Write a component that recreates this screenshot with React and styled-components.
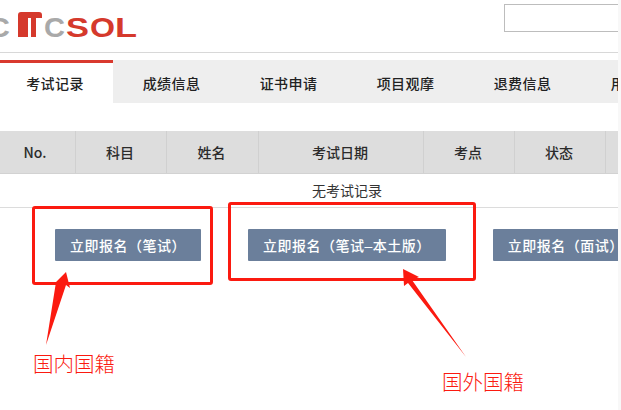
import React from 'react';
import styled, { createGlobalStyle } from 'styled-components';

const tabs = ['考试记录', '成绩信息', '证书申请', '项目观摩', '退费信息', '用户信息'];
const columns = [
  { label: 'No.', width: 76 },
  { label: '科目', width: 91 },
  { label: '姓名', width: 92 },
  { label: '考试日期', width: 165 },
  { label: '考点', width: 91 },
  { label: '状态', width: 91 },
  { label: '', width: 88 },
];
const buttons = ['立即报名（笔试）', '立即报名（笔试–本土版）', '立即报名（面试）'];

const GlobalStyle = createGlobalStyle`
  html, body {
    margin: 0;
    padding: 0;
    background: #f8f8f8;
    overflow: hidden;
  }
  body {
    font-family: "Liberation Sans", "Noto Sans CJK SC", sans-serif;
  }
`;

const Page = styled.div`
  position: relative;
  width: 621px;
  height: 410px;
  overflow: hidden;
`;

const Content = styled.div`
  width: 618px;
  height: 410px;
  background: #fff;
  overflow: hidden;
`;

const Header = styled.header`
  display: flex;
  justify-content: space-between;
  height: 52px;
  border-bottom: 1px solid #d8d8d8;
`;

const Logo = styled.svg`
  width: 140px;
  height: 52px;
  display: block;
`;

const SearchInput = styled.input`
  box-sizing: border-box;
  width: 114px;
  height: 28px;
  margin-top: 4px;
  border: 1px solid #bdbdbd;
  border-right: 0;
  background: #fff;
`;

const TabBar = styled.nav`
  display: flex;
  margin-top: 7px;
  height: 43px;
  background: #eeeeee;
`;

const Tab = styled.div`
  flex: 0 0 ${(p) => (p.$active ? '113px' : '117px')};
  box-sizing: border-box;
  height: 43px;
  padding-top: ${(p) => (p.$active ? '13px' : '16px')};
  padding-right: ${(p) => (p.$active ? '3px' : '0')};
  border-top: ${(p) => (p.$active ? '3px solid #d9392e' : '0')};
  background: ${(p) => (p.$active ? '#fff' : 'transparent')};
  color: #222;
  font-size: 14px;
  font-weight: 500;
  letter-spacing: 0.4px;
  line-height: 16px;
  text-align: center;
  white-space: nowrap;
`;

const Table = styled.div`
  width: 694px;
  margin-top: 28px;
  border-bottom: 1px solid #dcdcdc;
`;

const HeadRow = styled.div`
  display: flex;
  height: 42px;
  background: #dddddd;
  border-bottom: 1px solid #d2d2d2;
`;

const HeadCell = styled.div`
  flex: none;
  box-sizing: border-box;
  display: flex;
  align-items: center;
  justify-content: center;
  padding-right: 2px;
  border-right: 1px solid #d0d0d0;
  color: #2b2b2b;
  font-family: "Noto Sans CJK SC", sans-serif;
  font-size: 14px;
  font-weight: 500;

  &:first-child {
    padding-right: 5px;
  }
`;

const EmptyRow = styled.div`
  height: 33px;
  line-height: 34px;
  color: #333;
  font-size: 14px;
  text-align: center;
`;

const ButtonRow = styled.div`
  display: flex;
  gap: 47px;
  margin-top: 21px;
  padding-left: 55px;
`;

const ApplyButton = styled.button`
  flex: none;
  height: 32px;
  padding: 0 15px;
  border: 0;
  border-radius: 1px;
  background: #6b7f9b;
  color: #fff;
  font-family: inherit;
  font-size: 14px;
  font-weight: 500;
  letter-spacing: 0.5px;
  white-space: nowrap;
`;

const Callout = styled.div`
  position: absolute;
  box-sizing: border-box;
  left: ${(p) => p.$x}px;
  top: ${(p) => p.$y}px;
  width: ${(p) => p.$w}px;
  height: ${(p) => p.$h}px;
  border: 3px solid #fb1a10;
  border-radius: 3px;
`;

const Note = styled.div`
  position: absolute;
  left: ${(p) => p.$x}px;
  top: ${(p) => p.$y}px;
  color: #fb1a10;
  font-family: "Noto Sans CJK SC", sans-serif;
  font-size: 20.5px;
  font-weight: 200;
  line-height: 24px;
  white-space: nowrap;
`;

const ArrowLayer = styled.svg`
  position: absolute;
  left: 0;
  top: 0;
  width: 621px;
  height: 410px;
  pointer-events: none;
`;

export default function App() {
  return (
    <Page>
      <GlobalStyle />
      <Content>
        <Header>
          <Logo viewBox="0 0 140 52">
            <g fontFamily="Liberation Sans, sans-serif" fontWeight="700" fontSize="28">
              <text x="-13" y="37" fill="#a9a9a9" textLength="23" lengthAdjust="spacingAndGlyphs">C</text>
              <path d="M18 37V15a3 3 0 0 1 3-3h18a3 3 0 0 1 3 3v3h-6v19h-5V18h-3v19z" fill="#d5392c" />
              <text x="44" y="37" fill="#a9a9a9" textLength="21" lengthAdjust="spacingAndGlyphs">C</text>
              <text x="66" y="37" fill="#d5392c" textLength="23" lengthAdjust="spacingAndGlyphs">S</text>
              <text x="90" y="37" fill="#d5392c" textLength="25" lengthAdjust="spacingAndGlyphs">O</text>
              <text x="115" y="37" fill="#d5392c" textLength="22" lengthAdjust="spacingAndGlyphs">L</text>
            </g>
          </Logo>
          <SearchInput />
        </Header>
        <TabBar>
          {tabs.map((t, i) => (
            <Tab key={t} $active={i === 0}>{t}</Tab>
          ))}
        </TabBar>
        <Table>
          <HeadRow>
            {columns.map((c) => (
              <HeadCell key={c.width + c.label} style={{ width: c.width }}>{c.label}</HeadCell>
            ))}
          </HeadRow>
          <EmptyRow>无考试记录</EmptyRow>
        </Table>
        <ButtonRow>
          {buttons.map((b) => (
            <ApplyButton key={b}>{b}</ApplyButton>
          ))}
        </ButtonRow>
      </Content>

      <Callout $x={32} $y={206} $w={181} $h={79} />
      <Callout $x={228} $y={202} $w={248} $h={79} />
      <ArrowLayer viewBox="0 0 621 410">
        <polygon points="66,272 70,288 66,285 46,345 56,282" fill="#fb1a10" />
        <polygon points="403,269 419,277 412,280 466,357 408,283 404,286" fill="#fb1a10" />
      </ArrowLayer>
      <Note $x={33} $y={351}>国内国籍</Note>
      <Note $x={442} $y={369}>国外国籍</Note>
    </Page>
  );
}
